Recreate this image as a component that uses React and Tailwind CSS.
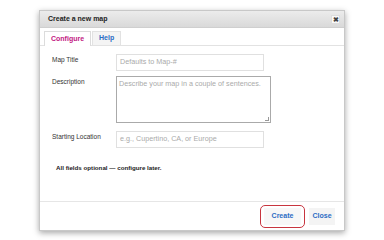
export default function App() {
  return (
    <div
      className="w-[384px] h-[240px] bg-white pt-[10px] pl-[39px]"
      style={{ fontFamily: '"Liberation Sans", Arial, sans-serif' }}
    >
      <div className="w-[306px] h-[221px] bg-white border border-[#c8c8c8] shadow-[0_2px_6px_rgba(0,0,0,0.35)] flex flex-col">
        {/* title bar */}
        <div className="h-[17px] flex items-center justify-between pl-[8px] pr-[4px] bg-gradient-to-b from-[#ececec] to-[#d9d9d9] border-b border-[#cfcfcf]">
          <span className="text-[7px] font-bold text-[#222]">Create a new map</span>
          <span className="w-[9px] h-[9px] bg-[#f8f8f8] border border-[#ddd] flex items-center justify-center text-[7px] font-bold leading-none text-[#444]">
            ✖
          </span>
        </div>

        {/* tabs */}
        <div className="flex items-end px-[4px] pt-[3px] border-b border-[#e2e2e2]">
          <div className="h-[15px] px-[6px] flex items-center border border-b-0 border-[#dcdcdc] bg-white -mb-px text-[7px] font-bold text-[#c2187f]">
            Configure
          </div>
          <div className="h-[14px] px-[6px] ml-px flex items-center border border-b-0 border-[#e2e2e2] bg-[#f4f4f4] text-[7px] font-bold text-[#2b6cc4]">
            Help
          </div>
        </div>

        {/* form */}
        <div className="flex-1 pl-[12px] pt-[8px]">
          <div className="flex items-start">
            <span className="w-[64px] text-[6.5px] text-[#333] pt-[1px]">Map Title</span>
            <div className="w-[148px] h-[17px] border border-[#e0e0e0] flex items-center px-[3px] text-[7.2px] text-[#aaa]">
              Defaults to Map-#
            </div>
          </div>
          <div className="flex items-start mt-[5px]">
            <span className="w-[64px] text-[6.5px] text-[#333] pt-[1px]">Description</span>
            <div className="relative w-[155px] h-[47px] border border-[#aaa] px-[2px] pt-[2px] text-[7.2px] text-[#aaa]">
              Describe your map in a couple of sentences.
              <span className="absolute right-[1px] bottom-[1px] w-[4px] h-[4px] border-r border-b border-[#999]"></span>
            </div>
          </div>
          <div className="flex items-start mt-[8px]">
            <span className="w-[64px] text-[6.5px] text-[#333] pt-[1px]">Starting Location</span>
            <div className="w-[148px] h-[17px] border border-[#e0e0e0] flex items-center px-[3px] text-[7.2px] text-[#aaa]">
              e.g., Cupertino, CA, or Europe
            </div>
          </div>
          <div className="mt-[15px] pl-[4px] text-[6.2px] font-bold text-[#222]">
            All fields optional — configure later.
          </div>
        </div>

        {/* footer */}
        <div className="h-[29px] border-t border-[#e6e6e6] flex items-center justify-end pr-[9px]">
          <div className="w-[45px] h-[23px] rounded-[5px] border border-[#c8353f] flex items-center justify-center">
            <span className="w-[37px] h-[17px] bg-[#f7f7f7] flex items-center justify-center text-[7px] font-bold text-[#2b6cc4]">
              Create
            </span>
          </div>
          <span className="ml-[4px] w-[26px] h-[17px] bg-[#f4f4f4] flex items-center justify-center text-[7px] font-bold text-[#2b6cc4]">
            Close
          </span>
        </div>
      </div>
    </div>
  );
}
